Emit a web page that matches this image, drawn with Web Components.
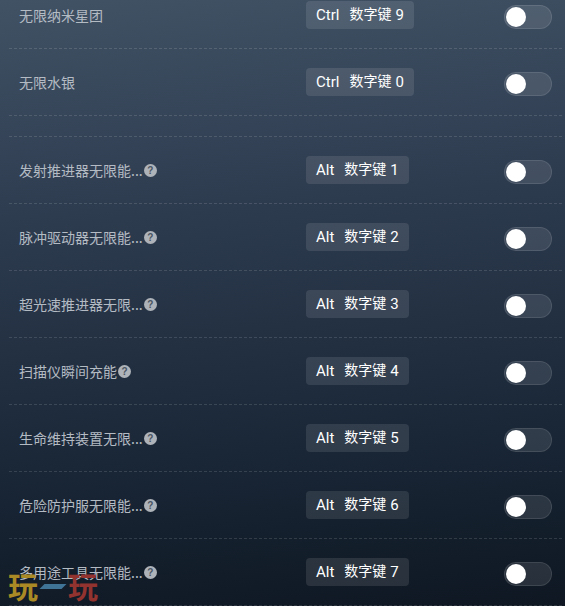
<!DOCTYPE html>
<html lang="zh">
<head>
<meta charset="utf-8">
<title>修改器</title>
<style>
  html, body { margin: 0; height: 100%; overflow: hidden; }
  body {
    width: 565px;
    height: 606px;
    background: linear-gradient(175deg, #415265 0%, #2d3b4f 35%, #1a2737 72%, #0e1722 100%);
    font-family: "Liberation Sans", "Noto Sans CJK SC", sans-serif;
    position: relative;
  }
</style>
</head>
<body>
<cheat-list>
  <cheat-row label="无限纳米星团" mod="Ctrl" num="9"></cheat-row>
  <cheat-row label="无限水银" mod="Ctrl" num="0"></cheat-row>
  <cheat-spacer></cheat-spacer>
  <cheat-row label="发射推进器无限能..." help mod="Alt" num="1"></cheat-row>
  <cheat-row label="脉冲驱动器无限能..." help mod="Alt" num="2"></cheat-row>
  <cheat-row label="超光速推进器无限..." help mod="Alt" num="3"></cheat-row>
  <cheat-row label="扫描仪瞬间充能" help mod="Alt" num="4"></cheat-row>
  <cheat-row label="生命维持装置无限..." help mod="Alt" num="5"></cheat-row>
  <cheat-row label="危险防护服无限能..." help mod="Alt" num="6"></cheat-row>
  <cheat-row label="多用途工具无限能..." help mod="Alt" num="7"></cheat-row>
</cheat-list>
<site-mark></site-mark>

<script>
class CheatList extends HTMLElement {
  constructor() {
    super();
    this.attachShadow({ mode: 'open' });
    this.shadowRoot.innerHTML = `
      <style>
        :host {
          display: flex;
          flex-direction: column;
          margin: -18px 3px 0 9px;
        }
      </style>
      <slot></slot>
    `;
  }
}

class CheatSpacer extends HTMLElement {
  constructor() {
    super();
    this.attachShadow({ mode: 'open' });
    this.shadowRoot.innerHTML = `
      <style>
        :host {
          display: block;
          height: 20px;
          border-bottom: 1px dashed rgba(255,255,255,0.13);
        }
      </style>
    `;
  }
}

class KeyChip extends HTMLElement {
  constructor() {
    super();
    this.attachShadow({ mode: 'open' });
    this.shadowRoot.innerHTML = `
      <style>
        :host {
          display: inline-flex;
          align-items: center;
          gap: 10px;
          height: 28px;
          padding: 0 10px;
          box-sizing: border-box;
          border-radius: 4px;
          background: rgba(255,255,255,0.1);
          color: #fff;
          font: 15px Roboto, "Noto Sans CJK SC", sans-serif;
          white-space: nowrap;
        }
      </style>
      <slot></slot>
    `;
  }
}

class ToggleSwitch extends HTMLElement {
  constructor() {
    super();
    this.attachShadow({ mode: 'open' });
    this.shadowRoot.innerHTML = `
      <style>
        :host {
          display: block;
          box-sizing: border-box;
          width: 48px;
          height: 24px;
          padding: 1px;
          border-radius: 12px;
          border: 1px solid rgba(255,255,255,0.1);
          background: rgba(255,255,255,0.1);
        }
        .knob {
          width: 20px;
          height: 20px;
          border-radius: 50%;
          background: #fff;
        }
      </style>
      <div class="knob"></div>
    `;
  }
}

class HelpBadge extends HTMLElement {
  constructor() {
    super();
    this.attachShadow({ mode: 'open' });
    this.shadowRoot.innerHTML = `
      <style>
        :host {
          display: inline-flex;
          align-items: center;
          justify-content: center;
          flex: none;
          width: 13px;
          height: 13px;
          margin-top: 2px;
          border-radius: 50%;
          background: #aeb3b9;
          color: #4a5563;
          font: bold 10px/13px "Liberation Sans", sans-serif;
        }
      </style>
      ?
    `;
  }
}

class CheatRow extends HTMLElement {
  constructor() {
    super();
    this.attachShadow({ mode: 'open' });
  }

  connectedCallback() {
    this.render();
  }

  render() {
    const label = this.getAttribute('label');
    const mod = this.getAttribute('mod');
    const num = this.getAttribute('num');

    this.shadowRoot.innerHTML = `
      <style>
        :host {
          display: grid;
          grid-template-columns: 287px 1fr auto;
          align-items: center;
          height: 67px;
          box-sizing: border-box;
          padding: 0 10px 1px;
          border-bottom: 1px dashed rgba(255,255,255,0.13);
        }
        .label {
          display: flex;
          align-items: center;
          gap: 1px;
          color: #b4bbc3;
          font: 14px "Noto Sans CJK SC", sans-serif;
          white-space: nowrap;
        }
        toggle-switch {
          margin-top: 4px;
        }
        .num {
          display: inline-flex;
          align-items: center;
          gap: 4px;
        }
        .cjk {
          font-size: 14px;
          line-height: 20px;
          padding-bottom: 2px;
        }
      </style>
      <div class="label">
        <span>${label}</span>
        ${this.hasAttribute('help') ? '<help-badge></help-badge>' : ''}
      </div>
      <div><key-chip><span>${mod}</span><span class="num"><span class="cjk">数字键</span><span>${num}</span></span></key-chip></div>
      <toggle-switch></toggle-switch>
    `;
  }
}

class SiteMark extends HTMLElement {
  constructor() {
    super();
    this.attachShadow({ mode: 'open' });
    this.shadowRoot.innerHTML = `
      <style>
        :host {
          position: absolute;
          left: 8px;
          top: 570px;
          display: flex;
          align-items: center;
          font: bold 30px/30px "Noto Sans CJK SC", sans-serif;
          pointer-events: none;
        }
        .gold { color: #a98a24; }
        .red { color: #93332f; }
        .dash {
          width: 22px;
          height: 5px;
          margin: 2px 4px 0;
          background: #3f7496;
          transform: skewX(-45deg);
        }
      </style>
      <span class="gold">玩</span><span class="dash"></span><span class="red">玩</span>
    `;
  }
}

customElements.define('cheat-list', CheatList);
customElements.define('cheat-spacer', CheatSpacer);
customElements.define('key-chip', KeyChip);
customElements.define('toggle-switch', ToggleSwitch);
customElements.define('help-badge', HelpBadge);
customElements.define('cheat-row', CheatRow);
customElements.define('site-mark', SiteMark);
</script>
</body>
</html>
